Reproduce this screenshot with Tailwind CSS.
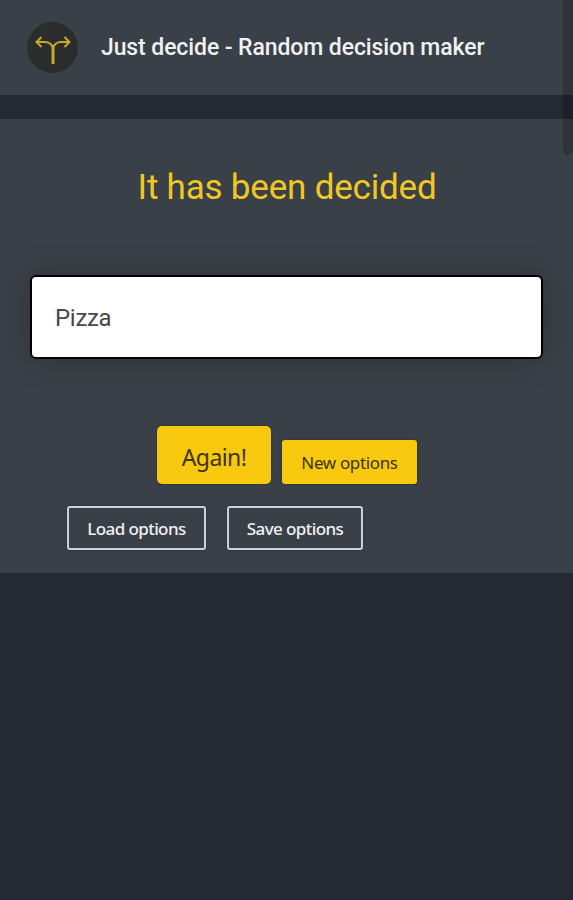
<!DOCTYPE html>
<html lang="en">
<head>
    <meta charset="UTF-8">
    <meta name="viewport" content="width=device-width, initial-scale=1.0">
    <title>Just decide - Random decision maker</title>
    <script src="https://cdn.jsdelivr.net/npm/@tailwindcss/browser@4"></script>
</head>
<body class="relative h-[900px] overflow-hidden bg-[#252932] font-[Roboto,sans-serif]">

<header class="flex h-[95px] items-center bg-[#3a4047] pl-[27px]">
    <svg class="size-[51px] shrink-0" viewBox="0 0 51 51" fill="none">
        <circle cx="25.5" cy="25.5" r="25.5" fill="#2b2c2c"/>
        <path d="M26 42V25" stroke="#c8a82c" stroke-width="3"/>
        <path d="M26 26Q24 20 18 20H10M26 26Q28 20 34 20H42" stroke="#c8a82c" stroke-width="2"/>
        <path d="M14.5 15L9.5 20L14.5 25M37.5 15L42.5 20L37.5 25" stroke="#c8a82c" stroke-width="2"/>
    </svg>
    <h1 class="ml-[23px] whitespace-nowrap pt-0.5 text-[23px] font-medium tracking-[-0.1px] text-[#f0f1f2]">Just decide - Random decision maker</h1>
</header>

<main class="mt-6 h-[454px] bg-[#3a4047] pt-[47px]">
    <h2 class="pl-px text-center text-[35px] leading-[44px] tracking-[-0.2px] text-[#f1c723]">It has been decided</h2>

    <div class="mx-[30px] mt-[65px] flex h-[84px] items-center rounded-md border-2 border-black bg-white pl-[23px] pt-px text-2xl tracking-[-0.3px] text-[#494949] shadow-[0_0_32px_rgba(0,0,0,0.22)]">Pizza</div>

    <!-- main actions -->
    <div class="mt-[67px] flex items-end justify-center gap-[11px] pl-px font-['Noto_Sans',sans-serif] text-[#3b350d]">
        <button class="h-[58px] w-[114px] rounded-[5px] bg-[#f8c90e] pt-1 text-[23px] tracking-[-0.6px] shadow-[0_0_2px_#172b49]">Again!</button>
        <button class="h-[44px] w-[135px] rounded-[3px] bg-[#f8c90e] pt-0.5 text-[17px] tracking-[-0.35px] shadow-[0_0_2px_#172b49]">New options</button>
    </div>

    <!-- stored options -->
    <div class="ml-[67px] mt-[22px] flex gap-[21px] font-['Noto_Sans',sans-serif] text-[17px] font-medium tracking-[-0.6px] text-[#f1f1f3]">
        <button class="h-[44px] w-[139px] rounded-[3px] border-2 border-[#cfd1d7] pt-0.5 shadow-[0_0_2px_#20243a]">Load options</button>
        <button class="h-[44px] w-[136px] rounded-[3px] border-2 border-[#cfd1d7] pt-0.5 shadow-[0_0_2px_#20243a]">Save options</button>
    </div>
</main>

<!-- scrollbar thumb -->
<div class="absolute right-0 top-0 h-[155px] w-[10px] rounded-b-[5px] bg-black/20"></div>

</body>
</html>
